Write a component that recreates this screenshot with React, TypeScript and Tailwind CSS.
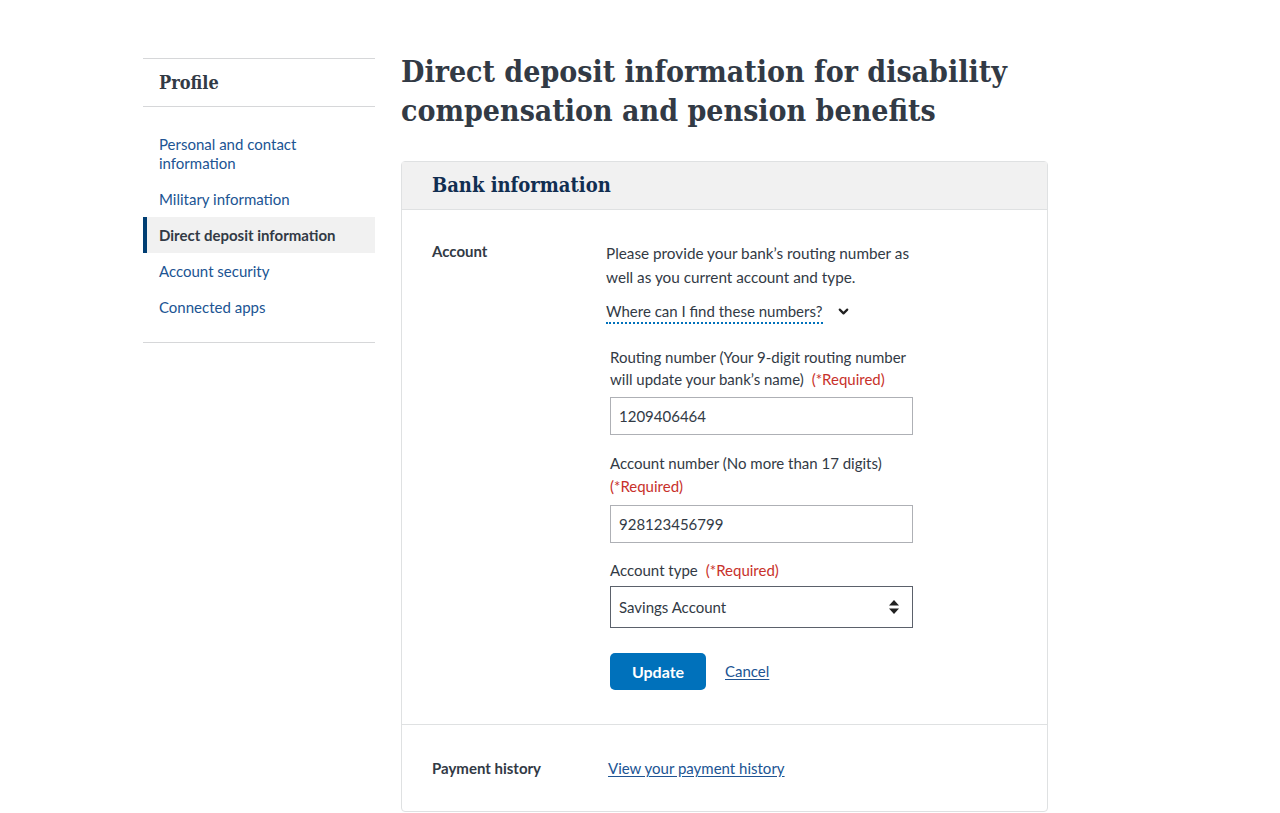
import { ChevronDown } from 'lucide-react';

const sans = 'font-["Source_Sans_Pro","Lato",sans-serif]';
const serif = 'font-["DejaVu_Serif_Condensed","DejaVu_Serif",serif]';

const navItems = [
  { label: 'Personal and contact information', active: false },
  { label: 'Military information', active: false },
  { label: 'Direct deposit information', active: true },
  { label: 'Account security', active: false },
  { label: 'Connected apps', active: false },
];

function Required() {
  return <span className="ml-2 inline-block text-[#c8312b]">(*Required)</span>;
}

function SideNav() {
  return (
    <nav className="w-[232px] shrink-0 self-start border-y border-[#d6d7d9]">
      <h2 className={`${serif} border-b border-[#d6d7d9] px-4 py-[12px] text-[18px] font-bold leading-[23px] text-[#323a45]`}>
        Profile
      </h2>
      <ul className="pb-[17px] pt-[19px]">
        {navItems.map((item) =>
          item.active ? (
            <li
              className="border-l-4 border-[#003e73] bg-[#f1f1f1] py-2 pl-3 text-[15px] font-bold leading-5 text-[#323a45]"
              key={item.label}
            >
              {item.label}
            </li>
          ) : (
            <li className="py-[8.5px] pl-4 pr-6 text-[15px] leading-[19px] text-[#205493]" key={item.label}>
              <a href="#">{item.label}</a>
            </li>
          ),
        )}
      </ul>
    </nav>
  );
}

export default function App() {
  return (
    <div className={`${sans} min-h-[813px] bg-white text-[#323a45]`}>
      <div className="mx-auto flex w-[994px] gap-[26px] pt-[58px]">
        <SideNav />

        <main className="w-[647px]">
          <h1 className={`${serif} -mt-[6px] text-[30px] font-bold leading-[39px] text-[#323a45]`}>
            Direct deposit information for disability compensation and pension benefits
          </h1>

          <section className="mt-[31px] rounded-[4px] border border-[#dfe1e2]">
            <header className="border-b border-[#dfe1e2] bg-[#f1f1f1] px-[30px] py-[11px]">
              <h2 className={`${serif} text-[20px] font-bold leading-[25px] text-[#112e51]`}>Bank information</h2>
            </header>

            <div className="flex px-[30px] pb-[34px] pt-[31px] text-[15px]">
              <h3 className="-mt-[2px] w-[174px] shrink-0 font-bold leading-[24px]">Account</h3>
              <div className="w-[315px]">
                <p className="text-[15.3px] leading-[24px]">
                  Please provide your bank’s routing number as well as you current account and type.
                </p>
                <button
                  className="mt-[12px] flex items-center gap-[13px] text-[15px] leading-[20px] text-[#323a45]"
                  type="button"
                >
                  <span className="border-b-2 border-dotted border-[#0071bb] pb-[1px]">Where can I find these numbers?</span>
                  <ChevronDown className="-mt-[3px] text-[#212121]" size={15} strokeWidth={3.5} />
                </button>

                <form className="mt-[22px] pl-1">
                  <label className="block leading-[22px]" htmlFor="routing">
                    Routing number (Your 9-digit routing number will update your bank’s name)
                    <Required />
                  </label>
                  <input
                    className="mt-[7px] block h-[38px] w-[303px] border border-[#aeb0b5] px-2 text-[15px] text-[#323a45]"
                    defaultValue="1209406464"
                    id="routing"
                  />

                  <label className="mt-[17px] block leading-[23px]" htmlFor="account">
                    Account number (No more than 17 digits)
                    <span className="block text-[#c8312b]">(*Required)</span>
                  </label>
                  <input
                    className="mt-[7px] block h-[38px] w-[303px] border border-[#aeb0b5] px-2 text-[15px] text-[#323a45]"
                    defaultValue="928123456799"
                    id="account"
                  />

                  <label className="mt-[16px] block leading-[22px]" htmlFor="type">
                    Account type
                    <Required />
                  </label>
                  <div className="relative mt-[5px] w-[303px]">
                    <select
                      className="block h-[42px] w-full appearance-none border border-[#5b616b] bg-white px-2 text-[15px] text-[#323a45]"
                      defaultValue="savings"
                      id="type"
                    >
                      <option value="checking">Checking Account</option>
                      <option value="savings">Savings Account</option>
                    </select>
                    <svg
                      aria-hidden="true"
                      className="pointer-events-none absolute right-[14px] top-[14px]"
                      height="14"
                      viewBox="0 0 10 14"
                      width="10"
                    >
                      <path d="M5 0 L10 5.5 H0 Z" fill="#212121" />
                      <path d="M5 14 L10 8.5 H0 Z" fill="#212121" />
                    </svg>
                  </div>

                  <div className="mt-[25px] flex items-center gap-[19px]">
                    <button
                      className="h-[37px] w-[96px] rounded-[5px] bg-[#0071bb] text-[16px] font-bold text-white"
                      type="button"
                    >
                      Update
                    </button>
                    <a className="text-[15px] text-[#205493] underline underline-offset-2" href="#">
                      Cancel
                    </a>
                  </div>
                </form>
              </div>
            </div>

            <div className="flex items-center border-t border-[#dfe1e2] px-[30px] py-[31px] text-[15px] leading-[24px]">
              <h3 className="w-[176px] shrink-0 font-bold">Payment history</h3>
              <a className="text-[#205493] underline underline-offset-2" href="#">
                View your payment history
              </a>
            </div>
          </section>
        </main>
      </div>
    </div>
  );
}
